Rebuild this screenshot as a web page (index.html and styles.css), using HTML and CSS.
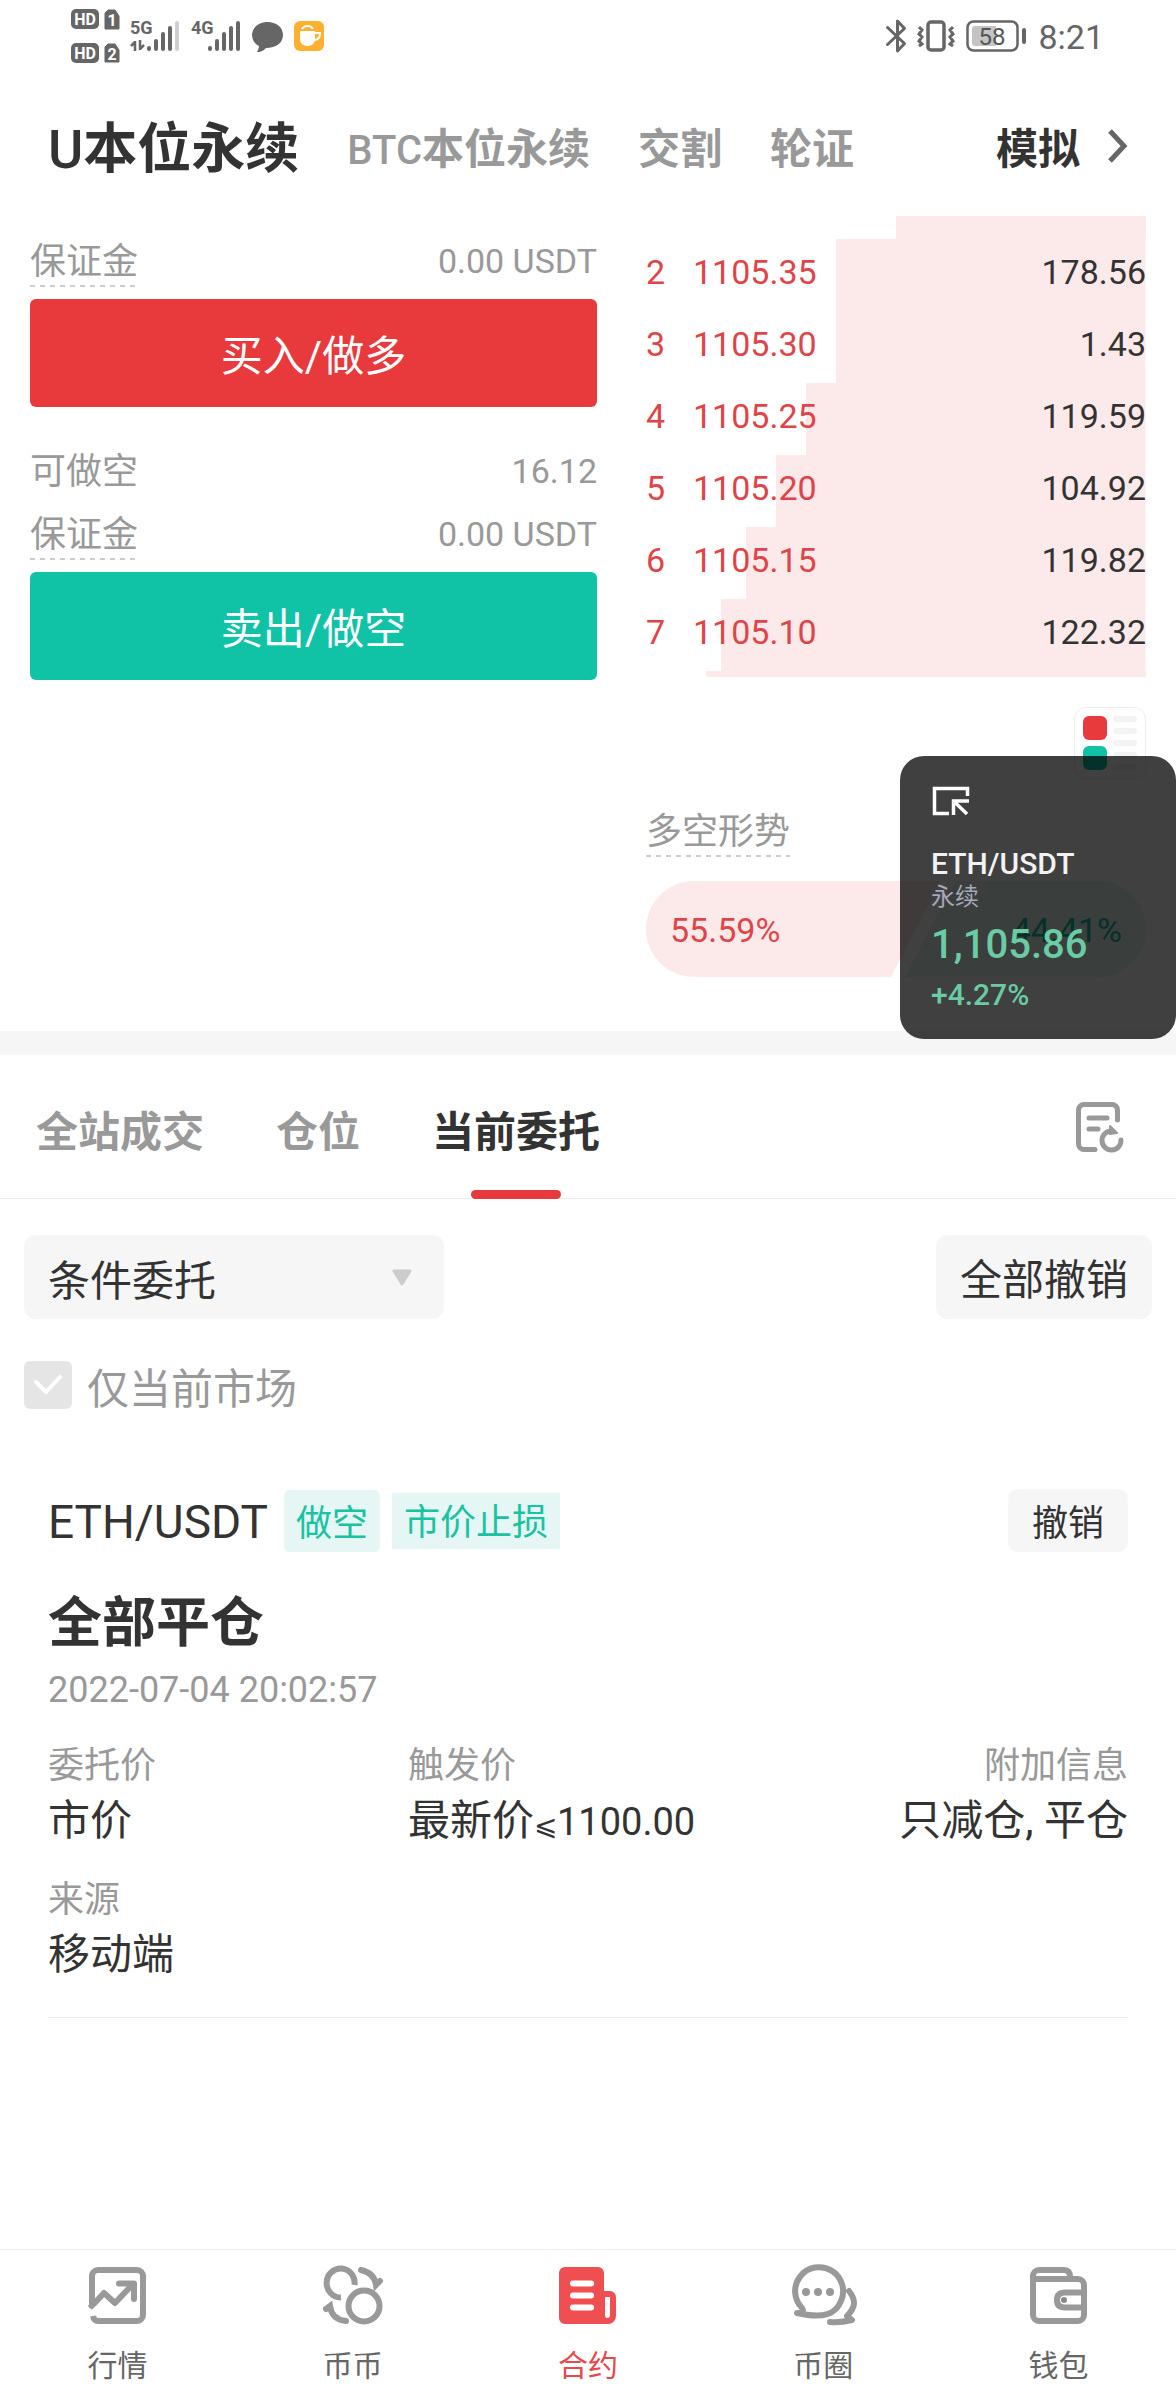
FILE: index.html
```html
<!DOCTYPE html>
<html lang="zh-CN">
<head>
<meta charset="utf-8">
<meta name="viewport" content="width=device-width, initial-scale=1">
<title>U本位永续</title>
<link rel="stylesheet" href="styles.css">
</head>
<body>
<div class="page">
  <div class="status-bar">
    <div class="status-group">
      <svg class="icon" width="48" height="54" viewBox="0 0 48 54">
        <g fill="#666">
          <rect x="0" y="0" width="28" height="20" rx="5"/>
          <path d="M37 1h7l4 6v13h-14v-16z" stroke="#666" stroke-linejoin="round"/>
          <rect x="0" y="34" width="28" height="20" rx="5"/>
          <path d="M37 35h7l4 6v12h-14v-15z" stroke="#666" stroke-linejoin="round"/>
        </g>
        <g class="badge-text" fill="#fff" text-anchor="middle">
          <text x="14" y="16">HD</text><text x="41" y="17">1</text>
          <text x="14" y="50">HD</text><text x="41" y="51">2</text>
        </g>
      </svg>
      <svg class="icon" width="50" height="32" viewBox="0 0 50 32">
        <text class="net-text" x="0" y="14" fill="#666">5G</text>
        <g stroke="#666" stroke-width="4" stroke-linecap="round">
          <path d="M19 28v1M26 21v8M33 14v15M40 8v21"/>
          <path d="M47 3v26" stroke="#d0d0d0"/>
        </g>
        <path d="M5 21v10M5 22l-4 4M10 20v10M10 29l4-4" stroke="#666" stroke-width="2.5" fill="none"/>
      </svg>
      <svg class="icon" width="50" height="32" viewBox="0 0 50 32">
        <text class="net-text" x="0" y="14" fill="#666">4G</text>
        <path d="M19 28v1M26 21v8M33 14v15M40 8v21M47 3v26" stroke="#666" stroke-width="4" stroke-linecap="round"/>
      </svg>
      <svg class="icon" width="31" height="31" viewBox="0 0 31 31">
        <path d="M15.500 1C7 1 0 6.500 0 14c0 5 3 9 7 11 0 2-1 4-2 6 5 0 7-2 9-4 10 0 17-5 17-13S24 1 15.500 1z" fill="#666"/>
      </svg>
      <svg class="icon" width="30" height="30" viewBox="0 0 30 30">
        <rect width="30" height="30" rx="6" fill="#fdb12f"/>
        <path d="M6 10h15v8c0 5-4 7-7.500 7S6 23 6 18z" fill="#fff"/>
        <path d="M21 12h5c0 5-2 7-6 7" fill="none" stroke="#fff" stroke-width="2"/>
        <path d="M8 8c2-4 9-4 11 0" fill="none" stroke="#fff" stroke-width="2"/>
      </svg>
    </div>
    <div class="status-group">
      <svg class="icon" width="20" height="34" viewBox="0 0 20 34">
        <path d="M1.500 8.500l17 16-7 7.500v-30l7 7.500-17 16" fill="none" stroke="#666" stroke-width="3" stroke-linejoin="round" stroke-linecap="round"/>
      </svg>
      <svg class="icon" width="38" height="32" viewBox="0 0 38 32">
        <rect x="11" y="2" width="16" height="28" rx="3" fill="none" stroke="#666" stroke-width="3.500"/>
        <path d="M2 7l3 3-3 4 3 3-3 4 3 3-3 2M36 7l-3 3 3 4-3 3 3 4-3 3 3 2" fill="none" stroke="#666" stroke-width="3"/>
      </svg>
      <svg class="icon" width="61" height="32" viewBox="0 0 61 32">
        <rect x="1.500" y="1.500" width="50" height="29" rx="6" fill="none" stroke="#666" stroke-width="2.500"/>
        <path d="M9 6h21v20H9a3 3 0 0 1-3-3V9a3 3 0 0 1 3-3z" fill="#c4c4c4"/>
        <path d="M58 10v12" stroke="#666" stroke-width="4" stroke-linecap="round"/>
        <text class="battery-text" x="26" y="25" text-anchor="middle" fill="#555">58</text>
      </svg>
      <span class="clock">8:21</span>
    </div>
  </div>

  <header class="market-tabs">
    <nav class="tab-list">
      <a class="market-tab is-active" href="#usdt"><span class="latin">U</span>本位永续</a>
      <a class="market-tab" href="#btc"><span class="latin">BTC</span>本位永续</a>
      <a class="market-tab" href="#delivery">交割</a>
      <a class="market-tab" href="#warrant">轮证</a>
    </nav>
    <a class="demo-link" href="#demo">模拟
      <svg class="icon" width="20" height="34" viewBox="0 0 20 34"><path d="M2 2l14 15L2 32" fill="none" stroke="#666" stroke-width="5"/></svg>
    </a>
  </header>

  <main>
    <section class="trade">
      <div class="order-form">
        <div class="info-row"><span class="hint">保证金</span><span class="amount">0.00 USDT</span></div>
        <button class="trade-btn buy" type="button">买入/做多</button>
        <div class="info-row available"><span>可做空</span><span class="amount">16.12</span></div>
        <div class="info-row"><span class="hint">保证金</span><span class="amount">0.00 USDT</span></div>
        <button class="trade-btn sell" type="button">卖出/做空</button>
      </div>

      <div class="market-depth">
        <table class="book">
          <tbody>
            <tr class="cut-top" style="--depth:50%"><td colspan="3"></td></tr>
            <tr style="--depth:62%"><td class="level">2</td><td class="price">1105.35</td><td class="size">178.56</td></tr>
            <tr style="--depth:62%"><td class="level">3</td><td class="price">1105.30</td><td class="size">1.43</td></tr>
            <tr style="--depth:68%"><td class="level">4</td><td class="price">1105.25</td><td class="size">119.59</td></tr>
            <tr style="--depth:74%"><td class="level">5</td><td class="price">1105.20</td><td class="size">104.92</td></tr>
            <tr style="--depth:80%"><td class="level">6</td><td class="price">1105.15</td><td class="size">119.82</td></tr>
            <tr style="--depth:85%"><td class="level">7</td><td class="price">1105.10</td><td class="size">122.32</td></tr>
            <tr class="cut-bottom" style="--depth:88%"><td colspan="3"></td></tr>
          </tbody>
        </table>
        <button class="book-mode" type="button" aria-label="盘口样式">
          <svg class="icon" width="54" height="54" viewBox="0 0 54 54">
            <rect x="0" y="0" width="24" height="24" rx="6" fill="#e8393c"/>
            <rect x="0" y="30" width="24" height="24" rx="6" fill="#10c2a6"/>
            <path d="M33 3h18M33 15h18M33 27h18M33 39h18M33 51h18" stroke="#f3f3f3" stroke-width="6" stroke-linecap="round"/>
          </svg>
        </button>
        <div class="sentiment-title"><span class="hint">多空形势</span></div>
        <div class="sentiment">
          <div class="long" style="width:59%">55.59%</div>
          <div class="short">44.41%</div>
        </div>
      </div>
    </section>

    <section class="orders">
      <div class="order-tabs">
        <nav class="order-tab-list">
          <a class="order-tab" href="#trades">全站成交</a>
          <a class="order-tab" href="#positions">仓位</a>
          <a class="order-tab is-active" href="#open">当前委托</a>
        </nav>
        <a class="history" href="#history" aria-label="历史委托">
          <svg class="icon" width="48" height="50" viewBox="0 0 48 50">
            <g fill="none" stroke="#999" stroke-width="5" stroke-linecap="round">
              <path d="M19 47.500H8a5.500 5.500 0 0 1-5.500-5.500V8A5.500 5.500 0 0 1 8 2.500h28A5.500 5.500 0 0 1 41.500 8v10"/>
              <path d="M13 16h18M13 27h9"/>
              <path d="M45 38a9.500 9.500 0 1 1-9-9"/>
            </g>
            <path d="M34 24l7 7-7 1z" fill="#999" stroke="#999" stroke-width="2" stroke-linejoin="round"/>
          </svg>
        </a>
      </div>

      <div class="filters">
        <div class="select-wrap">
          <select class="type-select" aria-label="委托类型"><option>条件委托</option></select>
          <svg class="caret" width="22" height="18" viewBox="0 0 22 18"><path d="M3 2h16l-8 13z" fill="#ccc" stroke="#ccc" stroke-width="3" stroke-linejoin="round"/></svg>
        </div>
        <button class="cancel-all" type="button">全部撤销</button>
      </div>
      <div class="only-current">
        <span class="check-wrap">
          <input class="check" type="checkbox" id="only" checked>
          <svg class="tick" width="28" height="20" viewBox="0 0 28 20"><path d="M2 7l10 10L26 2" fill="none" stroke="#fff" stroke-width="4" stroke-linecap="round" stroke-linejoin="round"/></svg>
        </span>
        <label for="only">仅当前市场</label>
      </div>

      <article class="order">
        <div class="order-head">
          <h2 class="pair">ETH/USDT</h2>
          <span class="tag round">做空</span>
          <span class="tag">市价止损</span>
          <button class="cancel" type="button">撤销</button>
        </div>
        <h3 class="action">全部平仓</h3>
        <time class="date">2022-07-04 20:02:57</time>
        <dl class="details">
          <div><dt>委托价</dt><dd>市价</dd></div>
          <div><dt>触发价</dt><dd>最新价<span class="sign">⩽</span><span class="num">1100.00</span></dd></div>
          <div class="end"><dt>附加信息</dt><dd>只减仓, 平仓</dd></div>
          <div><dt>来源</dt><dd>移动端</dd></div>
        </dl>
      </article>
    </section>
  </main>

  <nav class="bottom-nav">
    <a class="nav-item" href="#quotes">
      <svg class="icon" width="57" height="57" viewBox="0 0 57 57"><g fill="none" stroke="#999" stroke-width="6" stroke-linejoin="round">
        <path d="M3 41V9a6 6 0 0 1 6-6h39a6 6 0 0 1 6 6v39a6 6 0 0 1-6 6H9q-4 0-5-5"/>
        <path d="M1 41l14-15 11 10 18-19"/><path d="M30 16.500h15V32" stroke-linecap="round"/></g>
        <path d="M0 45l7-6v4l-7 7z" fill="#fff"/></svg>
      行情</a>
    <a class="nav-item" href="#spot">
      <svg class="icon" width="60" height="57" viewBox="0 1 60 57"><g fill="none" stroke="#999" stroke-width="6" stroke-linecap="round">
        <path d="M31.500 19A14 14.500 0 1 0 18 31.500" stroke-linecap="butt"/>
        <circle cx="41" cy="40" r="15.500"/>
        <path d="M38 4c9 2 14 7 15 15l4-4M23 55C13 54 8 48 7 40l-4 3"/></g></svg>
      币币</a>
    <a class="nav-item is-active" href="#futures">
      <svg class="icon" width="57" height="57" viewBox="0 0 57 57"><path d="M6 0h33a6 6 0 0 1 6 6v18h6a6 6 0 0 1 6 6v19a8 8 0 0 1-8 8H6a6 6 0 0 1-6-6V6a6 6 0 0 1 6-6z" fill="#ef4f51"/>
        <path d="M14 16.500h18M14 28.500h18M14 40.500h18" stroke="#fff" stroke-width="6" stroke-linecap="round"/>
        <path d="M46 30h5v18q0 3-3 3-2 0-2-3z" fill="#fff"/></svg>
      合约</a>
    <a class="nav-item" href="#community">
      <svg class="icon" width="67" height="57" viewBox="0 2 67 57"><g fill="none" stroke="#999" stroke-width="6" stroke-linecap="round" stroke-linejoin="round">
        <path d="M7 48q8 0 5-5A24 24 0 1 1 51 36C46 49 34 54 7 48z"/>
        <path d="M59 26c7 9 7 16-2 25l5 4q-12 3-22 2"/></g>
        <g fill="#999"><circle cx="16" cy="27" r="4"/><circle cx="28" cy="27" r="4"/><circle cx="40" cy="27" r="4"/></g></svg>
      币圈</a>
    <a class="nav-item" href="#wallet">
      <svg class="icon" width="57" height="57" viewBox="0 0 57 57"><g fill="none" stroke="#999" stroke-width="6" stroke-linejoin="round">
        <path d="M3 12V9a6 6 0 0 1 6-6h25q6 0 6 7"/>
        <path d="M3 12h45a6 6 0 0 1 6 6v30a6 6 0 0 1-6 6H9a6 6 0 0 1-6-6z"/>
        <path d="M54 25.500H35q-8 0-8 7.500t8 7.500h19"/></g>
        <circle cx="34" cy="33" r="3" fill="#888"/></svg>
      钱包</a>
  </nav>

  <aside class="float-quote">
    <svg class="icon" width="38" height="28" viewBox="-2 0 38 28"><path d="M34.500 9V1.500h-33v25H16M20.500 28V14H36M21 14.500L34 27" fill="none" stroke="#fff" stroke-width="3.500"/></svg>
    <div class="float-pair">ETH/USDT</div>
    <div class="float-kind">永续</div>
    <div class="float-price">1,105.86</div>
    <div class="float-change">+4.27%</div>
  </aside>
</div>
</body>
</html>
```
FILE: styles.css
```css
* { box-sizing: border-box; }

body {
  margin: 0;
  background: #fff;
  color: #333;
  font-family: Roboto, "Noto Sans CJK SC", sans-serif;
  font-size: 42px;
}

a { color: inherit; text-decoration: none; }
button { border: 0; padding: 0; font-family: inherit; color: inherit; }
h2, h3, dl, dd { margin: 0; }
.icon { display: block; flex: none; overflow: visible; }

.page {
  position: relative;
  display: flex;
  flex-direction: column;
  min-height: 100vh;
}

/* Status bar */
.status-bar {
  display: flex;
  justify-content: space-between;
  height: 72px;
  padding: 0 72px 0 71px;
}
.status-group { display: flex; align-items: center; gap: 11px; }
.badge-text { font-size: 16px; font-weight: 700; }
.net-text { font-size: 18px; font-weight: 700; }
.battery-text { font-size: 24px; }
.clock { padding-top: 2px; font-size: 34px; line-height: 40px; color: #666; }

/* Market tabs */
.market-tabs {
  display: flex;
  justify-content: space-between;
  align-items: center;
  height: 144px;
  padding: 12px 48px 0;
}
.tab-list { display: flex; align-items: center; gap: 48px; }
.market-tab { font-weight: 700; line-height: 72px; color: #999; white-space: nowrap; }
.market-tab .latin { font-size: 40px; font-weight: 500; }
.market-tab.is-active { font-size: 54px; color: #333; }
.market-tab.is-active .latin { font-size: 54px; }
.demo-link {
  display: flex;
  align-items: center;
  gap: 28px;
  font-weight: 700;
  line-height: 72px;
}
.demo-link .icon { margin-bottom: 8px; }

/* Order form and book */
.trade {
  display: grid;
  grid-template-columns: 567fr 500fr;
  gap: 49px;
  padding: 0 30px 54px;
  border-bottom: 24px solid #f6f6f6;
}
.order-form { padding-top: 21px; }
.info-row {
  display: flex;
  justify-content: space-between;
  height: 50px;
  margin-bottom: 12px;
  font-size: 36px;
  line-height: 50px;
  color: #999;
}
.info-row.available { margin: 40px 0 13px; }
.amount { font-size: 34px; line-height: 48px; }
.hint {
  background: repeating-linear-gradient(to right, #ccc 0 5px, transparent 5px 10px) left bottom / 100% 2px no-repeat;
}
.trade-btn {
  display: block;
  width: 100%;
  height: 108px;
  padding-top: 8px;
  border-radius: 6px;
  font-size: 42px;
  line-height: 100px;
  color: #fff;
}
.buy { background: #e8393c; }
.sell { background: #10c2a6; }

.book { width: 100%; border-collapse: collapse; font-size: 34px; }
.book tr {
  height: 72px;
  background: linear-gradient(to left, #fceaea var(--depth), transparent var(--depth));
}
.book td { padding: 0 0 6px; line-height: 40px; }
.book .cut-top { height: 23px; }
.book .cut-bottom { height: 6px; }
.book .cut-top td, .book .cut-bottom td { padding: 0; line-height: 0; }
.book .level { width: 47px; color: #e04448; }
.book .price { color: #e04448; }
.book .size { text-align: right; }

.book-mode {
  display: flex;
  align-items: center;
  justify-content: center;
  width: 72px;
  height: 72px;
  margin: 30px 0 28px auto;
  border: 1px solid #f3ecec;
  border-radius: 12px;
  background: #fff;
}
.sentiment-title {
  display: flex;
  margin-bottom: 24px;
  font-size: 36px;
  line-height: 50px;
  color: #999;
}
.sentiment {
  display: flex;
  height: 96px;
  border-radius: 48px;
  overflow: hidden;
  font-size: 34px;
  line-height: 98px;
}
.long {
  padding-left: 24px;
  background: #fceaea;
  color: #e04448;
  clip-path: polygon(0 0, 100% 0, calc(100% - 50px) 100%, 0 100%);
}
.short {
  flex: 1;
  margin-left: -36px;
  padding-right: 24px;
  background: #e5f6f4;
  color: #10c2a6;
  text-align: right;
  clip-path: polygon(50px 0, 100% 0, 100% 100%, 0 100%);
}

/* Orders */
.order-tabs {
  display: flex;
  justify-content: space-between;
  height: 144px;
  padding: 0 52px 0 36px;
  border-bottom: 1px solid #ebebeb;
}
.order-tab-list { display: flex; gap: 72px; }
.order-tab {
  position: relative;
  padding-top: 12px;
  font-weight: 700;
  line-height: 131px;
  color: #999;
}
.order-tab.is-active { color: #333; }
.order-tab.is-active::after {
  content: "";
  position: absolute;
  left: 50%;
  bottom: -1px;
  width: 90px;
  height: 9px;
  margin-left: -45px;
  border-radius: 5px;
  background: #e8393c;
}
.history { display: flex; align-items: center; }

.filters { display: flex; justify-content: space-between; padding: 36px 24px 42px; }
.select-wrap { position: relative; width: 420px; }
.type-select {
  appearance: none;
  width: 100%;
  height: 84px;
  padding: 8px 24px 0;
  border: 0;
  border-radius: 12px;
  background: #f6f6f6;
  font-family: inherit;
  font-size: 42px;
  color: #333;
}
.caret { position: absolute; right: 31px; top: 34px; pointer-events: none; }
.cancel-all {
  height: 84px;
  padding: 8px 24px 0;
  border-radius: 12px;
  background: #f6f6f6;
  font-size: 42px;
  line-height: 76px;
}
.only-current {
  display: flex;
  gap: 15px;
  height: 56px;
  padding: 0 24px;
  line-height: 58px;
  color: #999;
}
.check-wrap { position: relative; width: 48px; height: 48px; }
.check {
  appearance: none;
  display: block;
  width: 48px;
  height: 48px;
  margin: 0;
  border-radius: 6px;
  background: #e5e5e5;
}
.tick { position: absolute; left: 10px; top: 14px; pointer-events: none; }

.order { margin: 72px 48px 0; padding-bottom: 31px; border-bottom: 1px solid #ebebeb; }
.order-head { display: flex; align-items: center; gap: 12px; height: 63px; }
.pair { padding: 4px 4px 0 0; font-size: 46px; font-weight: 400; line-height: 59px; }
.tag {
  padding: 4px 12px 0;
  background: #e5f6f4;
  font-size: 36px;
  line-height: 52px;
  color: #19c3a2;
}
.tag.round { padding-top: 6px; border-radius: 6px; line-height: 56px; }
.cancel {
  height: 63px;
  margin-left: auto;
  padding: 8px 24px 0;
  border-radius: 10px;
  background: #f6f6f6;
  font-size: 36px;
  line-height: 55px;
}
.action { margin-top: 36px; font-size: 54px; font-weight: 700; line-height: 72px; }
.date { display: block; margin-top: 6px; font-size: 36px; line-height: 48px; color: #999; }
.details {
  display: grid;
  grid-template-columns: repeat(3, 1fr);
  row-gap: 24px;
  margin-top: 28px;
}
.details dt { font-size: 36px; line-height: 48px; color: #999; }
.details dd { line-height: 62px; white-space: nowrap; }
.details .sign { font-size: 28px; line-height: 1; }
.details .num { font-size: 38px; line-height: 1; }
.details .end { text-align: right; }

/* Bottom navigation */
.bottom-nav {
  display: grid;
  grid-template-columns: repeat(5, 1fr);
  height: 151px;
  margin-top: auto;
  border-top: 1px solid #f0f0f0;
}
.nav-item {
  display: flex;
  flex-direction: column;
  justify-content: space-between;
  align-items: center;
  padding: 17px 0 16px;
  font-size: 30px;
  line-height: 36px;
  color: #666;
}
.nav-item.is-active { color: #e8484b; }

/* Floating quote window */
.float-quote {
  position: absolute;
  top: 756px;
  right: 0;
  width: 276px;
  height: 283px;
  padding: 31px;
  border-radius: 24px;
  background: rgba(0, 0, 0, 0.75);
  font-weight: 500;
  color: #6acba5;
}
.float-pair { margin-top: 31px; font-size: 30px; line-height: 36px; color: #f2f2f2; }
.float-kind { font-size: 24px; font-weight: 400; line-height: 30px; color: #a3a8b5; }
.float-price { font-size: 40px; line-height: 66px; }
.float-change { font-size: 30px; line-height: 34px; }
```
